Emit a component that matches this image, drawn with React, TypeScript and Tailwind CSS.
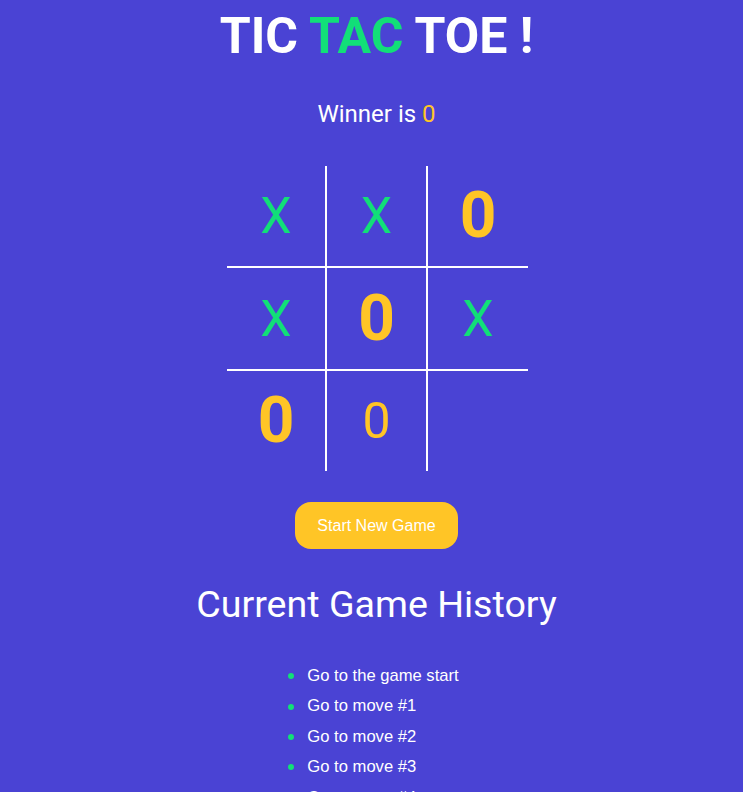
import React from "react";

type Cell = { v: "X" | "0" | ""; win?: boolean };

const board: Cell[] = [
  { v: "X" },
  { v: "X" },
  { v: "0", win: true },
  { v: "X" },
  { v: "0", win: true },
  { v: "X" },
  { v: "0", win: true },
  { v: "0" },
  { v: "" },
];

const moves = [
  "Go to the game start",
  "Go to move #1",
  "Go to move #2",
  "Go to move #3",
  "Go to move #4",
];

const rowHeights = ["h-[102px]", "h-[103px]", "h-[100px]"];

function Square({ cell, index }: { cell: Cell; index: number }) {
  const col = index % 3;
  const row = Math.floor(index / 3);
  const right = col < 2 ? "border-r-2" : "";
  const bottom = row < 2 ? "border-b-2" : "";
  const color = cell.v === "X" ? "text-[#12df78]" : "text-[#ffc526]";
  const size = cell.win ? "text-[64px] font-bold" : "text-[50px] font-normal";
  return (
    <button
      type="button"
      className={`${rowHeights[row]} flex items-center justify-center border-white ${right} ${bottom} ${color} ${size} leading-none`}
    >
      {cell.v}
    </button>
  );
}

export default function App() {
  return (
    <div className="min-h-screen bg-[#4a43d4] pl-[10px] flex flex-col items-center font-['Roboto',sans-serif] text-white">
      <h1 className="mt-[6px] text-[50px] leading-[60px] font-bold">
        TIC <span className="text-[#12df78]">TAC</span> TOE !
      </h1>
      <p className="mt-[32px] text-[24px] leading-[32px]">
        Winner is <span className="text-[#ffc526]">0</span>
      </p>
      <div className="mt-[36px] ml-[2px] grid grid-cols-[100px_101px_100px]">
        {board.map((c, i) => (
          <Square key={i} cell={c} index={i} />
        ))}
      </div>
      <button
        type="button"
        className="mt-[31px] h-[47px] w-[163px] rounded-[16px] bg-[#ffc526] text-white text-[16px] font-['Liberation_Sans',Arial,sans-serif]"
      >
        Start New Game
      </button>
      <h2 className="mt-[33px] text-[37.6px] leading-[44px] font-normal">
        Current Game History
      </h2>
      <ul className="mt-[35px] w-fit pr-[6px] font-['Liberation_Sans',Arial,sans-serif] text-[16.6px] leading-[30.4px]">
        {moves.map((m) => (
          <li key={m} className="flex items-center gap-[13px]">
            <span className="w-[6px] h-[6px] rounded-full bg-[#12df78]" />
            <button type="button" className="text-white">
              {m}
            </button>
          </li>
        ))}
      </ul>
    </div>
  );
}
